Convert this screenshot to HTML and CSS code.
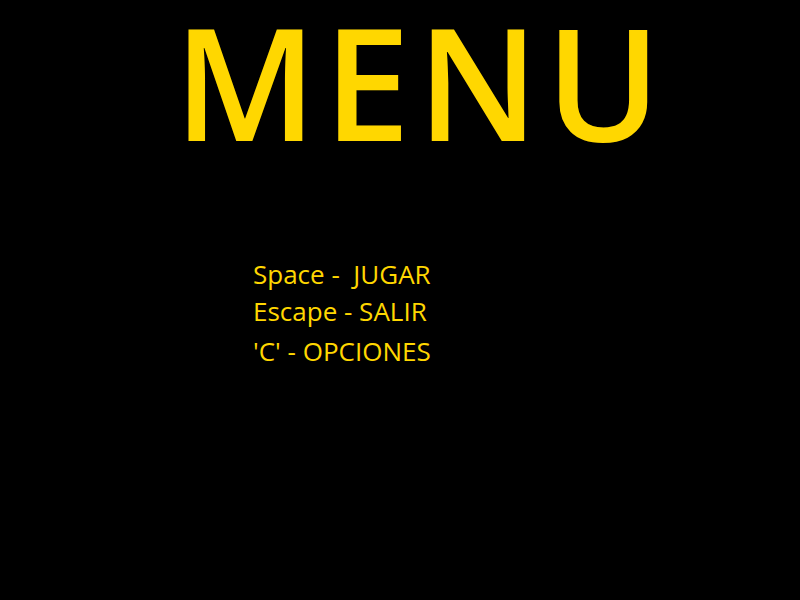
FILE: index.html
```html
<!DOCTYPE html>
<html>
<head>
<meta charset="utf-8">
<link rel="stylesheet" href="styles.css">
</head>
<body>
<main class="screen">
  <h1 class="title">MENU</h1>
  <ul class="options">
    <li class="opt">Space -&nbsp; JUGAR</li>
    <li class="opt">Escape - SALIR</li>
    <li class="opt opt-last">'C' - OPCIONES</li>
  </ul>
</main>
</body>
</html>
```
FILE: styles.css
```css
* {
  box-sizing: border-box;
}
html, body {
  margin: 0;
  padding: 0;
  background: #000;
  width: 800px;
  height: 600px;
  overflow: hidden;
}
.screen {
  display: flex;
  flex-direction: column;
  font-family: "Open Sans", "Liberation Sans", sans-serif;
  color: #ffd700;
}
.title {
  margin: 0;
  padding: 0 0 0 174px;
  font-weight: 600;
  font-size: 155px;
  line-height: normal;
  letter-spacing: 7px;
  height: 160px;
  white-space: nowrap;
  display: flex;
  align-items: center;
}
.options {
  list-style: none;
  margin: 0;
  padding: 96px 0 0 253px;
  font-size: 26px;
}
.opt {
  height: 37px;
  line-height: 37px;
  white-space: nowrap;
}
.opt-last {
  margin-top: 3px;
}
```
